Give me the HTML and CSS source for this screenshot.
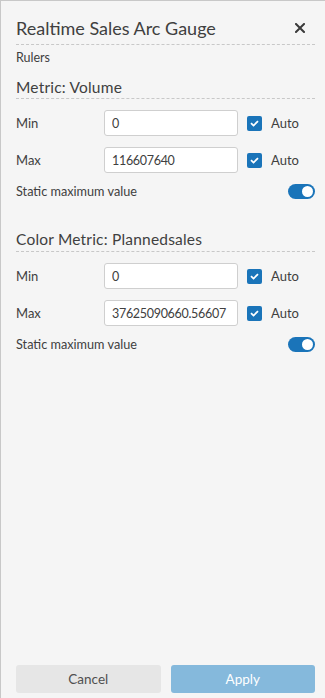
FILE: index.html
```html
<!DOCTYPE html>
<html lang="en">
<head>
    <meta charset="UTF-8">
    <meta name="viewport" content="width=device-width, initial-scale=1.0">
    <title>Realtime Sales Arc Gauge</title>
    <link rel="stylesheet" href="styles.css">
</head>
<body>

<div class="panel">
    <div class="panel-header">
        <h1 class="panel-title">Realtime Sales Arc Gauge</h1>
        <button class="close-btn" aria-label="Close">
            <svg width="10" height="10" viewBox="0 0 10 10">
                <path d="M1 1 L9 9 M9 1 L1 9" stroke="#3a3a3a" stroke-width="2" stroke-linecap="square"/>
            </svg>
        </button>
    </div>

    <div class="group-label">Rulers</div>

    <h2 class="section-title">Metric: Volume</h2>
    <div class="field-row">
        <label class="field-label">Min</label>
        <input class="field-input" type="text" value="0">
        <span class="check"><svg width="9" height="7" viewBox="0 0 9 7"><path d="M1 3.2 L3.5 5.6 L8 1.2" fill="none" stroke="#fff" stroke-width="1.8"/></svg></span>
        <span class="check-label">Auto</span>
    </div>
    <div class="field-row">
        <label class="field-label">Max</label>
        <input class="field-input" type="text" value="116607640">
        <span class="check"><svg width="9" height="7" viewBox="0 0 9 7"><path d="M1 3.2 L3.5 5.6 L8 1.2" fill="none" stroke="#fff" stroke-width="1.8"/></svg></span>
        <span class="check-label">Auto</span>
    </div>
    <div class="switch-row">
        <span>Static maximum value</span>
        <span class="switch"><span class="knob"></span></span>
    </div>

    <h2 class="section-title second">Color Metric: Plannedsales</h2>
    <div class="field-row">
        <label class="field-label">Min</label>
        <input class="field-input" type="text" value="0">
        <span class="check"><svg width="9" height="7" viewBox="0 0 9 7"><path d="M1 3.2 L3.5 5.6 L8 1.2" fill="none" stroke="#fff" stroke-width="1.8"/></svg></span>
        <span class="check-label">Auto</span>
    </div>
    <div class="field-row">
        <label class="field-label">Max</label>
        <input class="field-input" type="text" value="37625090660.56607">
        <span class="check"><svg width="9" height="7" viewBox="0 0 9 7"><path d="M1 3.2 L3.5 5.6 L8 1.2" fill="none" stroke="#fff" stroke-width="1.8"/></svg></span>
        <span class="check-label">Auto</span>
    </div>
    <div class="switch-row">
        <span>Static maximum value</span>
        <span class="switch"><span class="knob"></span></span>
    </div>

    <div class="panel-footer">
        <button class="btn btn-cancel">Cancel</button>
        <button class="btn btn-apply">Apply</button>
    </div>
</div>

</body>
</html>
```

FILE: styles.css
```css
body {
    margin: 0;
    font-family: 'Lato', 'Liberation Sans', sans-serif;
    color: #404040;
    background: #f5f5f5;
}

.panel {
    height: 698px;
    box-sizing: border-box;
    display: flex;
    flex-direction: column;
    border-top: 1px solid #c8c8c8;
    border-left: 1px solid #c8c8c8;
    background: #f5f5f5;
    padding: 0 10px 0 15px;
}

.panel-header {
    display: flex;
    align-items: center;
    justify-content: space-between;
    height: 33px;
    padding-top: 10px;
    border-bottom: 1px dashed #c8c8c8;
}

.panel-title {
    margin: 0;
    font-size: 18px;
    font-weight: normal;
    color: #404040;
}

.close-btn {
    border: none;
    background: none;
    padding: 0;
    margin-right: 10px;
    margin-top: 1px;
    display: flex;
}

.group-label {
    margin-top: 5px;
    font-size: 12.5px;
    line-height: 16px;
}

.section-title {
    margin: 11px 0 0;
    font-size: 15.5px;
    font-weight: normal;
    line-height: 20px;
    padding-bottom: 1px;
    border-bottom: 1px dashed #c8c8c8;
    color: #404040;
    letter-spacing: 0.2px;
}

.section-title.second {
    margin-top: 30px;
    padding-bottom: 2px;
}

.field-row {
    display: flex;
    align-items: center;
    height: 26px;
    margin-top: 11px;
    font-size: 13px;
}

.field-label {
    width: 88px;
}

.field-input {
    width: 134px;
    height: 26px;
    box-sizing: border-box;
    border: 1px solid #cfcfcf;
    border-radius: 3px;
    background: #fff;
    padding: 0 6px 0 7px;
    font-family: inherit;
    font-size: 12.5px;
    letter-spacing: -0.3px;
    color: #404040;
}

.check {
    width: 15px;
    height: 15px;
    margin-left: 9px;
    border-radius: 2px;
    background: #1a74b9;
    display: flex;
    align-items: center;
    justify-content: center;
}

.check-label {
    margin-left: 9px;
}

.switch-row {
    display: flex;
    align-items: center;
    justify-content: space-between;
    height: 16px;
    margin-top: 10px;
    font-size: 12.7px;
}

.switch {
    width: 27px;
    height: 15px;
    border-radius: 8px;
    background: #1a74b9;
    display: flex;
    align-items: center;
    justify-content: flex-end;
    padding-right: 2px;
    box-sizing: border-box;
}

.knob {
    width: 11px;
    height: 11px;
    border-radius: 50%;
    background: #fff;
}

.panel-footer {
    margin-top: auto;
    margin-bottom: 5px;
    display: flex;
    gap: 10px;
}

.btn {
    flex: 1;
    height: 28px;
    border: none;
    border-radius: 3px;
    font-family: inherit;
    font-size: 13.5px;
}

.btn-cancel {
    background: #e6e6e6;
    color: #505050;
}

.btn-apply {
    background: #85b9dc;
    color: #fff;
}
```
